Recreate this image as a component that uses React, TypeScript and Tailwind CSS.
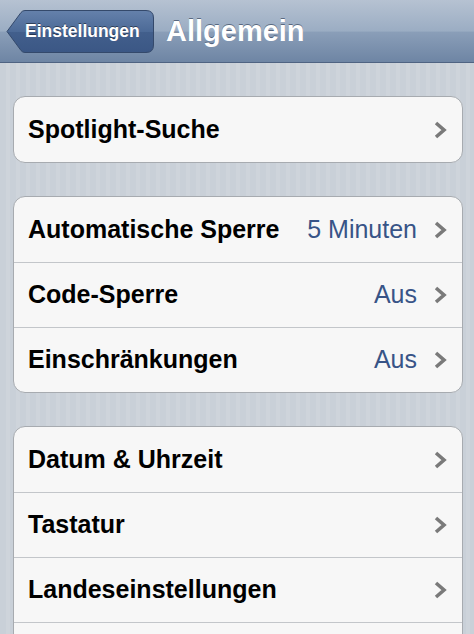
import React from 'react';

type Row = { label: string; value?: string };

const groups: Row[][] = [
    [{ label: 'Spotlight-Suche' }],
    [
        { label: 'Automatische Sperre', value: '5 Minuten' },
        { label: 'Code-Sperre', value: 'Aus' },
        { label: 'Einschränkungen', value: 'Aus' },
    ],
    [
        { label: 'Datum & Uhrzeit' },
        { label: 'Tastatur' },
        { label: 'Landeseinstellungen' },
        // next row is cut off by the bottom edge, only its top border shows
        { label: '' },
    ],
];

const Chevron = () => (
    <svg width="14" height="20" viewBox="0 0 14 20" className="shrink-0">
        <polyline points="3,3 11,10 3,17" fill="none" stroke="#7a7a7a" strokeWidth="3.6" strokeLinejoin="miter" strokeLinecap="butt" />
    </svg>
);

const BackButton = ({ label }: { label: string }) => (
    <div className="relative h-[43px] w-[148px] shrink-0">
        {/* button shape with arrow point on the left */}
        <svg width="148" height="43" viewBox="0 0 148 43" className="absolute inset-0">
            <defs>
                <linearGradient id="backFill" x1="0" y1="0" x2="0" y2="1">
                    <stop offset="0%" stopColor="#6581ab" />
                    <stop offset="50%" stopColor="#4c6a97" />
                    <stop offset="51%" stopColor="#425f8c" />
                    <stop offset="100%" stopColor="#3b5785" />
                </linearGradient>
            </defs>
            <path
                d="M1 21.5 L15 2.5 Q16.5 0.5 19 0.5 L140 0.5 Q147.5 0.5 147.5 8 L147.5 35 Q147.5 42.5 140 42.5 L19 42.5 Q16.5 42.5 15 40.5 Z"
                fill="url(#backFill)"
                stroke="#34496b"
                strokeWidth="1"
            />
        </svg>
        <div className="relative flex h-full items-center pl-[19px] pr-[8px] text-[17.5px] font-bold text-white [text-shadow:0_-1px_0_rgba(0,0,0,0.45)]">
            {label}
        </div>
    </div>
);

export default function App() {
    return (
        <div
            className="h-[634px] w-[474px] overflow-hidden bg-[repeating-linear-gradient(90deg,#c9d0d8_0px,#c9d0d8_6px,#ced4db_6px,#ced4db_10px)]"
            style={{ fontFamily: '"Liberation Sans", Helvetica, Arial, sans-serif' }}
        >
            {/* Navigation bar */}
            <div className="flex h-[63px] items-center gap-[12px] border-b border-[#4f6382] bg-[linear-gradient(to_bottom,#b6c2d2_0%,#9badc3_50%,#8a9eb8_52%,#6e85a4_100%)] pl-[6px] pt-[1px]">
                <BackButton label="Einstellungen" />
                <div className="text-[29px] font-bold text-white [text-shadow:0_-1px_0_rgba(40,55,80,0.6)]">Allgemein</div>
            </div>

            {/* Grouped table */}
            <div className="flex flex-col gap-[33px] pt-[33px] pl-[13px] pr-[11px]">
                {groups.map((rows, gi) => (
                    <div key={gi} className="overflow-hidden rounded-[12px] border border-[#a7abb0] bg-[#f7f7f7]">
                        {rows.map((row, ri) => (
                            <div
                                key={ri}
                                className={`flex h-[65px] items-center pl-[14px] pr-[15px] ${ri > 0 ? 'border-t border-[#c3c6ca]' : ''}`}
                            >
                                <span className="flex-1 text-[25px] font-bold text-black">{row.label}</span>
                                {row.value && <span className="mr-[16px] text-[25px] text-[#385487]">{row.value}</span>}
                                {row.label && <Chevron />}
                            </div>
                        ))}
                    </div>
                ))}
            </div>
        </div>
    );
}
